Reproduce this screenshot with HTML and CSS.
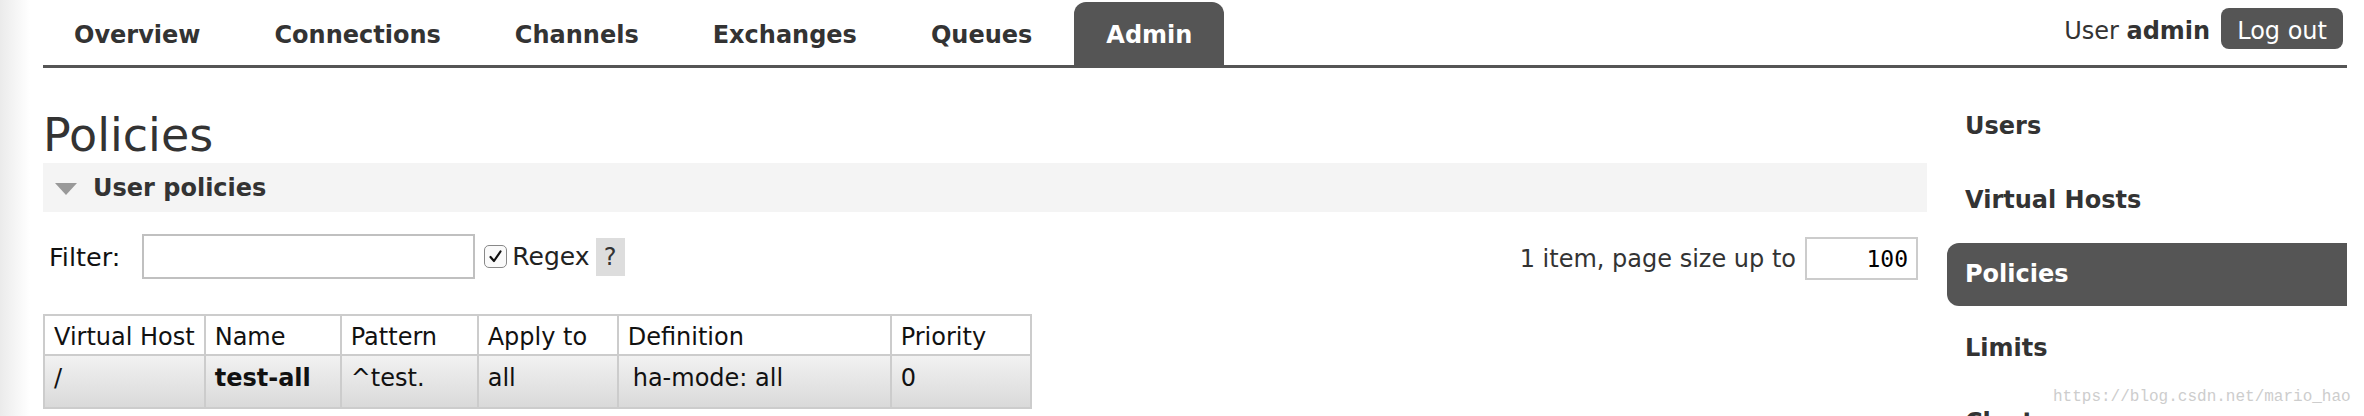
FILE: index.html
```html
<!DOCTYPE html>
<html>
  <head>
    <meta charset="utf-8" />
    <meta name="viewport" content="width=device-width, initial-scale=1" />
    <link rel="stylesheet" href="styles.css">
  </head>

  <body>
    <div class="page">
      <header class="top">
        <ul class="tabs">
          <li>Overview</li>
          <li>Connections</li>
          <li>Channels</li>
          <li>Exchanges</li>
          <li>Queues</li>
          <li class="active">Admin</li>
        </ul>
        <div class="login">
          <span>User <b>admin</b></span>
          <button class="logout">Log out</button>
        </div>
      </header>

      <div class="content">
        <main class="main">
          <h1>Policies</h1>
          <h2 class="section-head"><span class="tri"></span>User policies</h2>

          <div class="filter-row">
            <div class="filter">
              <label for="filter">Filter:</label>
              <input type="text" id="filter" class="filter-input">
              <span class="check">
                <svg width="17" height="17" viewBox="0 0 17 17"><path d="M3.5 9 L7 13 L13.5 3.5" fill="none" stroke="#111" stroke-width="2.2" stroke-linecap="round" stroke-linejoin="round"/></svg>
              </span>
              <span class="regex">Regex</span>
              <span class="help">?</span>
            </div>
            <div class="paging">
              1 item, page size up to
              <input type="text" class="page-size" value="100">
            </div>
          </div>

          <table class="list">
            <thead>
              <tr>
                <th class="c-vhost">Virtual Host</th>
                <th class="c-name">Name</th>
                <th class="c-pattern">Pattern</th>
                <th class="c-apply">Apply to</th>
                <th class="c-def">Definition</th>
                <th class="c-prio">Priority</th>
              </tr>
            </thead>
            <tbody>
              <tr>
                <td>/</td>
                <td><b>test-all</b></td>
                <td>^test.</td>
                <td>all</td>
                <td><span class="def">ha-mode: all</span></td>
                <td>0</td>
              </tr>
            </tbody>
          </table>
        </main>

        <aside class="side">
          <ul>
            <li>Users</li>
            <li>Virtual Hosts</li>
            <li class="active">Policies</li>
            <li>Limits</li>
            <li>Cluster</li>
          </ul>
        </aside>
      </div>

      <div class="watermark">https://blog.csdn.net/mario_hao</div>
    </div>
  </body>
</html>
```

FILE: styles.css
```css
body {
  margin: 0;
  font-family: "DejaVu Sans", Verdana, sans-serif;
  color: #222;
  background: linear-gradient(to right, #ebebeb 0, #fff 30px);
}
.page {
  position: relative;
  padding: 0 17px 0 43px;
}

/* top bar */
.top {
  display: flex;
  justify-content: space-between;
  align-items: flex-start;
  height: 65px;
  border-bottom: 3px solid #555;
}
.tabs {
  display: flex;
  list-style: none;
  margin: 0;
  padding: 0;
}
.tabs li {
  margin: 2px 10px 0 0;
  padding: 19px 32px 16px;
  line-height: 28px;
  font-size: 24px;
  font-weight: bold;
  color: #333;
  border-radius: 12px 12px 0 0;
}
.tabs li:first-child {
  padding-left: 31px;
}
.tabs li.active {
  background: #555;
  color: #fff;
}
.login {
  display: flex;
  align-items: baseline;
  margin: 8px 4px 0 0;
  font-size: 24px;
  color: #333;
}
.logout {
  margin-left: 11px;
  padding: 9px 16px 4px;
  border: 0;
  border-radius: 8px;
  background: #555;
  color: #fff;
  font-family: inherit;
  font-size: 24px;
  line-height: 28px;
}

/* layout */
.content {
  display: flex;
  gap: 20px;
}
.main {
  flex: 1;
}
h1 {
  margin: 40px 0 0;
  font-size: 46px;
  font-weight: normal;
  line-height: 55px;
  color: #333;
}
.section-head {
  display: flex;
  align-items: center;
  margin: 0;
  padding: 13px 12px 11px;
  background: #f4f4f4;
  font-size: 24px;
  line-height: 25px;
  color: #333;
}
.tri {
  width: 0;
  height: 0;
  border-left: 11px solid transparent;
  border-right: 11px solid transparent;
  border-top: 12px solid #999;
  margin-right: 16px;
}

/* filter */
.filter-row {
  display: flex;
  justify-content: space-between;
  align-items: center;
  margin-top: 21px;
  padding: 0 9px 0 6px;
  font-size: 24px;
  color: #111;
}
.filter {
  display: flex;
  align-items: center;
}
.filter label {
  font-size: 25.5px;
}
.filter-input {
  box-sizing: border-box;
  width: 333px;
  height: 45px;
  margin-left: 22px;
  border: 2px solid #c0c0c0;
}
.check {
  box-sizing: border-box;
  display: flex;
  align-items: center;
  justify-content: center;
  width: 23px;
  height: 23px;
  margin-left: 9px;
  border: 1.5px solid #888;
  border-radius: 5px;
  background: #fafafa;
}
.regex {
  margin-left: 5px;
  font-size: 25px;
  color: #222;
}
.help {
  width: 29px;
  height: 38px;
  margin-left: 6px;
  background: #ddd;
  text-align: center;
  line-height: 38px;
  color: #333;
}
.paging {
  display: flex;
  align-items: center;
  margin-top: 4px;
  font-size: 24px;
  color: #333;
}
.page-size {
  box-sizing: border-box;
  width: 113px;
  height: 43px;
  margin-left: 9px;
  padding: 0 8px;
  border: 2px solid #ccc;
  text-align: right;
  font-family: "DejaVu Sans Mono", monospace;
  font-size: 23px;
  color: #000;
}

/* table */
.list {
  margin-top: 34px;
  border-collapse: collapse;
  border: 2px solid #ccc;
  font-size: 24px;
  color: #111;
}
.list th,
.list td {
  border: 2px solid #ccc;
  padding: 7px 9px 3px;
  line-height: 28px;
  text-align: left;
  font-weight: normal;
  white-space: nowrap;
  vertical-align: top;
}
.list td {
  padding: 8px 9px 15px;
}
.list tbody tr {
  background: linear-gradient(#f2f2f2, #d9d9d9);
}
.c-vhost { width: 140px; }
.c-name { width: 116px; }
.c-pattern { width: 117px; }
.c-apply { width: 120px; }
.c-def { width: 253px; }
.c-prio { width: 120px; }
.def {
  padding-left: 5px;
}

/* side menu */
.side {
  width: 400px;
  margin-top: 27px;
}
.side ul {
  list-style: none;
  margin: 0;
  padding: 0;
}
.side li {
  margin-bottom: 11px;
  padding: 17px 18px 18px;
  line-height: 28px;
  font-size: 24px;
  font-weight: bold;
  color: #333;
  border-radius: 12px 0 0 12px;
}
.side li.active {
  background: #555;
  color: #fff;
}

.watermark {
  position: absolute;
  left: 2053px;
  top: 388px;
  font-family: "Liberation Mono", monospace;
  font-size: 16px;
  color: #cdcdcd;
}
```
